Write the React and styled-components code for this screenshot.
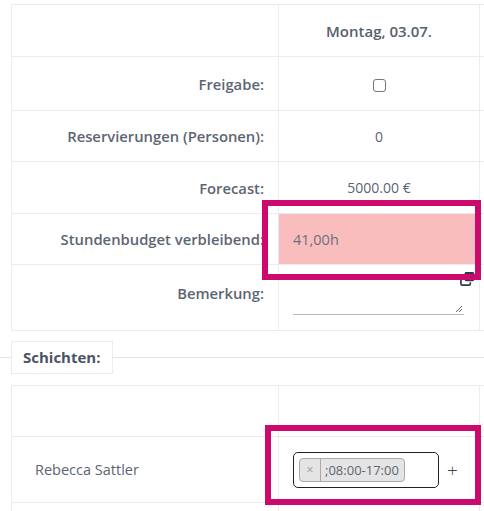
import React from 'react'
import styled, { createGlobalStyle } from 'styled-components'

const GlobalStyle = createGlobalStyle`
  html, body {
    margin: 0;
    padding: 0;
    background: #fff;
    overflow: hidden;
  }
  body {
    font-family: "Open Sans", "Noto Sans", sans-serif;
    font-size: 14px;
    color: #5b6471;
  }
`

const Page = styled.div`
  width: 484px;
  height: 511px;
  overflow: hidden;
  padding-top: 4px;
  box-sizing: border-box;
`

const Wrap = styled.div`
  position: relative;
  padding-left: ${(p) => (p.$flush ? 0 : 11)}px;
`

const Table = styled.table`
  border-collapse: collapse;
  table-layout: fixed;
  width: 620px;
`

const Row = styled.tr`
  height: ${(p) => p.$h || 52}px;
`

const Cell = styled.td`
  border: 1px solid #e7edf3;
  padding: 0 14px;
  vertical-align: ${(p) => p.$valign || 'middle'};
  text-align: ${(p) => p.$align || 'center'};
  white-space: nowrap;
  position: relative;
`

const LabelCell = styled(Cell)`
  text-align: right;
  font-weight: 600;
  font-size: 14.8px;
  color: #5d6572;
  padding-bottom: ${(p) => p.$lift || 0}px;
`

const NameCell = styled(Cell)`
  text-align: left;
  padding-left: 23px;
  font-size: 14.5px;
`

const Header = styled.span`
  font-weight: 600;
  font-size: 15px;
  color: #56606e;
`

const Checkbox = styled.span`
  display: inline-block;
  width: 11px;
  height: 11px;
  border: 1px solid #777;
  border-radius: 3px;
  vertical-align: middle;
`

const Budget = styled(Cell)`
  background: #f8bdbc;
  color: #6a7280;
  text-align: left;
  font-size: 14.5px;
`

const NoteBox = styled.div`
  width: 171px;
  height: 49px;
  border-bottom: 1px solid #bbb;
  position: relative;
`

const Grip = styled.svg`
  position: absolute;
  right: 1px;
  bottom: 1px;
`

const CopyIcon = styled.svg`
  position: absolute;
  top: 6px;
  right: 4px;
`

const Highlight = styled.div`
  position: absolute;
  left: ${(p) => p.$x}px;
  top: ${(p) => p.$y}px;
  width: ${(p) => p.$w}px;
  height: ${(p) => p.$h}px;
  border: 6px solid #cc0a6d;
  box-sizing: border-box;
  pointer-events: none;
`

const Fieldset = styled.fieldset`
  margin: 10px 0 0;
  padding: 0 0 0 11px;
  border: none;
  border-top: 1px solid #e0e6ec;
  min-width: 0;
  position: relative;
`

const Legend = styled.legend`
  padding: 0 11px;
  height: 31px;
  line-height: 31px;
  border: 1px solid #e7edf3;
  font-weight: 700;
  color: #4b5463;
  font-size: 15px;
  margin-left: 0;
`

const Spacer = styled.div`
  height: 11px;
`

const SelectBox = styled.div`
  display: inline-flex;
  align-items: center;
  width: 146px;
  height: 36px;
  border: 1px solid #222;
  border-radius: 5px;
  box-sizing: border-box;
  padding-left: 5px;
  vertical-align: middle;
`

const Chip = styled.span`
  display: inline-flex;
  align-items: center;
  height: 24px;
  box-sizing: border-box;
  border: 1px solid #aaa;
  border-radius: 4px;
  background: #e4e4e4;
  color: #5f6570;
  font-size: 13px;
`

const ChipX = styled.span`
  width: 21px;
  text-align: center;
  color: #999;
  font-size: 12px;
  border-right: 1px solid #aaa;
  height: 22px;
  line-height: 21px;
  box-sizing: border-box;
`

const ChipText = styled.span`
  padding: 0 5px 0 4px;
`

const Plus = styled.span`
  display: inline-block;
  margin-left: 8px;
  font-size: 19px;
  color: #444;
  vertical-align: middle;
  font-weight: 300;
`

const Columns = () => (
  <colgroup>
    <col style={{ width: 267 }} />
    <col style={{ width: 201 }} />
    <col />
  </colgroup>
)

export default function App() {
  return (
    <Page>
      <GlobalStyle />
      <Wrap>
        <Table>
          <Columns />
          <tbody>
            <Row $h={52}>
              <Cell />
              <Cell><Header>Montag, 03.07.</Header></Cell>
              <Cell />
            </Row>
            <Row $h={54}>
              <LabelCell>Freigabe:</LabelCell>
              <Cell><Checkbox /></Cell>
              <Cell />
            </Row>
            <Row $h={51}>
              <LabelCell>Reservierungen (Personen):</LabelCell>
              <Cell>0</Cell>
              <Cell />
            </Row>
            <Row $h={52}>
              <LabelCell>Forecast:</LabelCell>
              <Cell>5000.00 €</Cell>
              <Cell />
            </Row>
            <Row $h={51}>
              <LabelCell>Stundenbudget verbleibend:</LabelCell>
              <Budget>41,00h</Budget>
              <Cell />
            </Row>
            <Row $h={66}>
              <LabelCell $lift={10}>Bemerkung:</LabelCell>
              <Cell $align="left" $valign="top">
                <CopyIcon width="15" height="15" viewBox="0 0 16 16">
                  <rect x="5" y="1" width="10" height="10" rx="1.5" fill="#2c3a4d" />
                  <path d="M4 5H2.5A1.5 1.5 0 0 0 1 6.5v7A1.5 1.5 0 0 0 2.5 15h7a1.5 1.5 0 0 0 1.5-1.5V12" fill="none" stroke="#2c3a4d" strokeWidth="1.8" />
                </CopyIcon>
                <NoteBox>
                  <Grip width="8" height="8" viewBox="0 0 8 8">
                    <path d="M1 7L7 1M4 7L7 4" stroke="#666" strokeWidth="1" />
                  </Grip>
                </NoteBox>
              </Cell>
              <Cell />
            </Row>
          </tbody>
        </Table>
        <Highlight $x={262} $y={196} $w={219} $h={80} />
      </Wrap>
      <Fieldset>
        <Legend>Schichten:</Legend>
        <Spacer />
        <Wrap $flush>
          <Table>
            <Columns />
            <tbody>
              <Row $h={51}>
                <Cell />
                <Cell />
                <Cell />
              </Row>
              <Row $h={66}>
                <NameCell>Rebecca Sattler</NameCell>
                <Cell $align="left">
                  <SelectBox>
                    <Chip>
                      <ChipX>×</ChipX>
                      <ChipText>;08:00-17:00</ChipText>
                    </Chip>
                  </SelectBox>
                  <Plus>+</Plus>
                </Cell>
                <Cell />
              </Row>
              <Row $h={40}>
                <Cell />
                <Cell />
                <Cell />
              </Row>
            </tbody>
          </Table>
          <Highlight $x={254} $y={40} $w={216} $h={80} />
        </Wrap>
      </Fieldset>
    </Page>
  )
}
